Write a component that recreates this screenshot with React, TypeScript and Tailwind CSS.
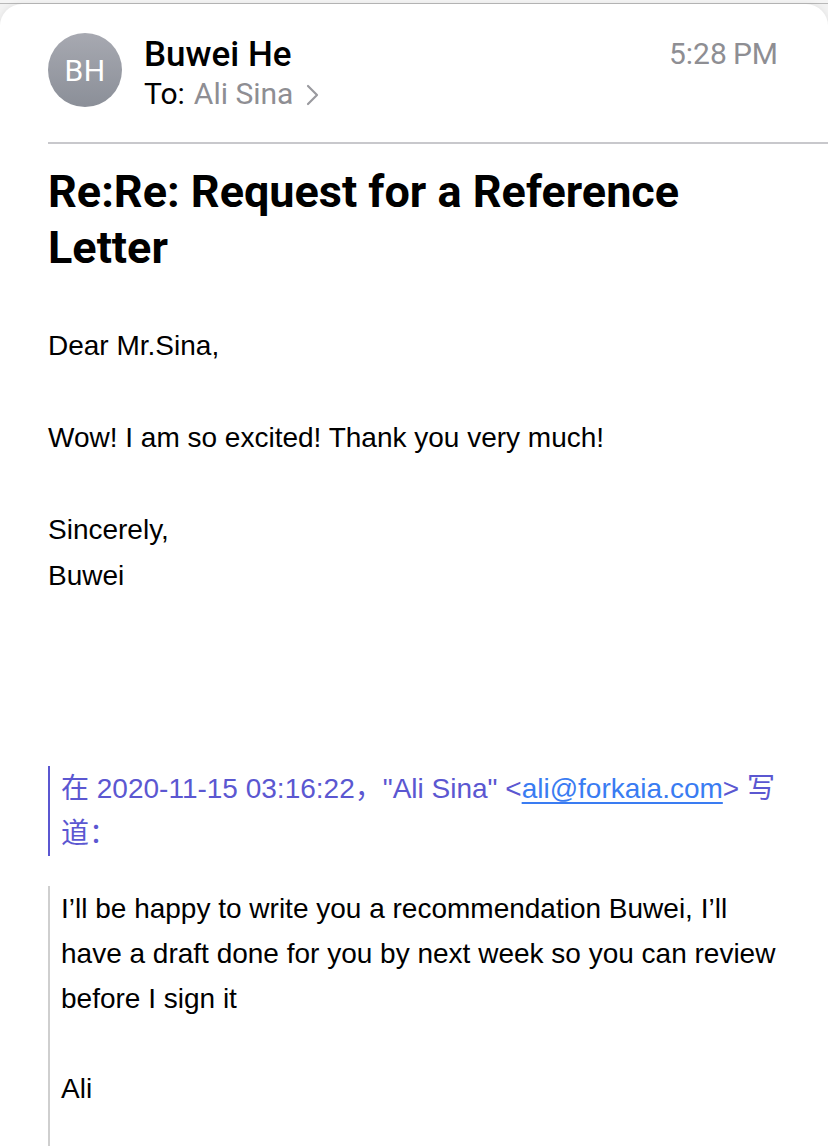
import React from "react";

export default function App() {
  return (
    <div className="w-[828px] h-[1146px] overflow-hidden bg-[#f2f2f2] relative">
      <div className="h-[4px] bg-[#f4f4f4] border-b border-[#b9b9b9]" />
      <div className="bg-white rounded-t-[22px] shadow-[0_0_6px_rgba(0,0,0,0.08)] h-[1200px]">
        {/* header */}
        <div className="flex items-start pl-[48px] pr-[50px] pt-[29px]">
          <div className="w-[74px] h-[74px] rounded-full bg-gradient-to-b from-[#a7a9b1] to-[#8b8f98] flex items-center justify-center shrink-0">
            <span className="text-white text-[30px] tracking-[0.5px]" style={{ fontFamily: "Roboto, 'Noto Sans', sans-serif" }}>BH</span>
          </div>
          <div className="flex-1 ml-[22px]" style={{ fontFamily: "Roboto, 'Noto Sans', sans-serif" }}>
            <div className="flex justify-between items-start">
              <div className="text-[35px] leading-[44px] text-black font-medium">Buwei He</div>
              <div className="text-[30px] leading-[44px] text-[#8e8e93] mt-[-1px]">5:28&#8201;PM</div>
            </div>
            <div className="flex items-center text-[30px] leading-[36px] mt-[-1px]">
              <span className="text-black">To:</span>
              <span className="text-[#8e8e93] ml-[9px]">Ali Sina</span>
              <svg width="14" height="22" viewBox="0 0 14 22" className="ml-[13px] mt-[2px]">
                <path d="M2 2 L11 11 L2 20" fill="none" stroke="#9a9a9f" strokeWidth="2.2" strokeLinecap="round" strokeLinejoin="round" />
              </svg>
            </div>
          </div>
        </div>
        <div className="ml-[48px] mt-[30px] h-[2px] bg-[#c8c8cc]" />
        {/* title */}
        <h1 className="px-[48px] mt-[20px] text-[45px] leading-[56px] font-bold text-black" style={{ fontFamily: "Roboto, 'Noto Sans', sans-serif" }}>
          Re:Re: Request for a Reference Letter
        </h1>
        {/* body */}
        <div className="px-[48px] mt-[47px] text-[28px] leading-[46px] text-black" style={{ fontFamily: "'Liberation Sans', Arial, sans-serif" }}>
          <div>Dear Mr.Sina,</div>
          <div className="h-[46px]" />
          <div>Wow! I am so excited! Thank you very much!</div>
          <div className="h-[46px]" />
          <div>Sincerely,</div>
          <div>Buwei</div>
        </div>
        {/* quote header */}
        <div className="ml-[48px] mt-[167px] border-l-[2px] border-[#5b57d1] pl-[11px] pr-[34px] text-[28px] leading-[45px] text-[#5b57d1]" style={{ fontFamily: "'Liberation Sans', Arial, 'Noto Sans CJK SC', sans-serif" }}>
          <p>
            在 2020-11-15 03:16:22，"Ali Sina" &lt;<a className="text-[#3a7cf2] underline decoration-[1.5px] underline-offset-[4px]">ali@forkaia.com</a>&gt; 写
          </p>
          <p>道：</p>
        </div>
        {/* quoted message */}
        <div className="ml-[48px] mt-[30px] border-l-[2px] border-[#cfcfcf] pl-[11px] pr-[34px] text-[28px] leading-[45px] text-black h-[400px]" style={{ fontFamily: "'Liberation Sans', Arial, sans-serif" }}>
          <div>I’ll be happy to write you a recommendation Buwei, I’ll have a draft done for you by next week so you can review before I sign it</div>
          <div className="h-[45px]" />
          <div>Ali</div>
        </div>
      </div>
    </div>
  );
}
